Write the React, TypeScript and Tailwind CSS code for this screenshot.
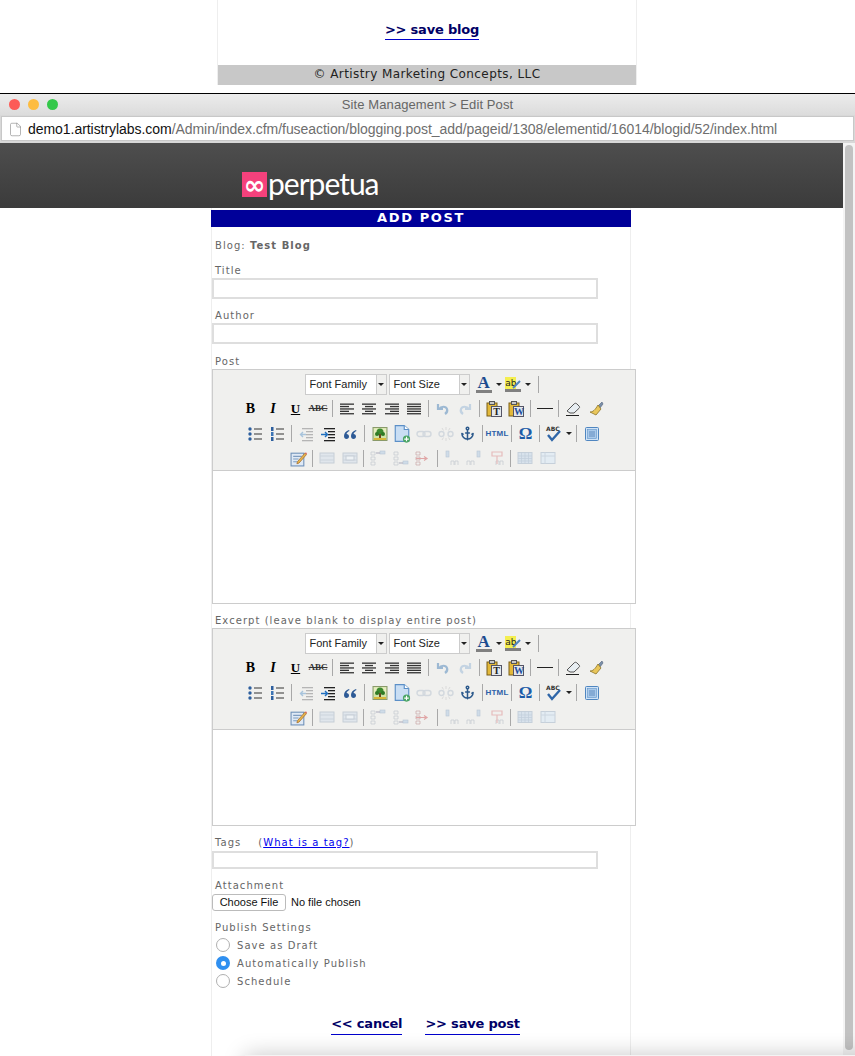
import React from 'react';
import { Anchor, File } from 'lucide-react';

const verdana = { fontFamily: '"DejaVu Sans", Verdana, sans-serif' };

const Cell = ({ children, w = 'w-[22.5px]' }: { children: React.ReactNode; w?: string }) => (
  <div className={`${w} h-[20px] flex items-center justify-center shrink-0`}>{children}</div>
);

const Sep = ({ w = 'w-[6px]' }: { w?: string }) => (
  <div className={`${w} h-[20px] flex items-center justify-center shrink-0`}>
    <div className="w-[1px] h-[17px] bg-[#a8a8a8]" />
  </div>
);

const Arrow = () => (
  <div className="w-0 h-0 border-x-[3px] border-x-transparent border-t-[3px] border-t-[#222]" />
);

const Ico = ({ children, size = 16 }: { children: React.ReactNode; size?: number }) => (
  <svg width={size} height={size} viewBox="0 0 16 16" fill="none">
    {children}
  </svg>
);

const Lines = ({ rows, color = '#333' }: { rows: [number, number][]; color?: string }) => (
  <Ico>
    {rows.map(([a, b], i) => (
      <rect key={i} x={a} y={2.5 + i * 2.4} width={b - a} height={1.3} fill={color} />
    ))}
  </Ico>
);

const AlignLeft = () => <Lines rows={[[1, 15], [1, 10], [1, 15], [1, 10], [1, 15]]} />;
const AlignCenter = () => <Lines rows={[[1, 15], [4, 12], [1, 15], [4, 12], [1, 15]]} />;
const AlignRight = () => <Lines rows={[[1, 15], [6, 15], [1, 15], [6, 15], [1, 15]]} />;
const AlignFull = () => <Lines rows={[[1, 15], [1, 15], [1, 15], [1, 15], [1, 15]]} />;

const Undo = ({ flip }: { flip?: boolean }) => (
  <Ico>
    <g transform={flip ? 'matrix(-1 0 0 1 16 0)' : undefined}>
      <path d="M3 3v5h5" stroke={flip ? '#c3d3e2' : '#9db9d3'} strokeWidth="2.200" />
      <path d="M4 8c2-3 7-3 8 0 .7 2-.5 4-2 5" stroke={flip ? '#c3d3e2' : '#9db9d3'} strokeWidth="2.200" />
    </g>
  </Ico>
);

const Paste = ({ letter, color }: { letter: string; color: string }) => (
  <div className="relative w-[16px] h-[16px]">
    <svg width="16" height="16" viewBox="0 0 16 16" fill="none">
      <rect x="1" y="2" width="10" height="13" fill="#e3b93a" stroke="#7a5f18" />
      <rect x="3.5" y="0.5" width="5" height="3" fill="#c8c8c8" stroke="#555" />
      <rect x="5.500" y="5.500" width="10" height="10" fill="#e4e8ec" stroke="#556" />
    </svg>
    <span className={`absolute left-[6px] top-[6px] w-[10px] text-center text-[10px] leading-[10px] font-bold ${color}`} style={{ fontFamily: '"Liberation Serif", serif' }}>
      {letter}
    </span>
  </div>
);

const Eraser = () => (
  <Ico>
    <path d="M2 10 9 3c1-1 2-1 3 0l2 2c.8.8.8 1.5 0 2.300L9 12H5z" fill="#e8eef2" stroke="#555" />
    <path d="M1 14.500h13" stroke="#222" />
  </Ico>
);

const Brush = () => (
  <Ico>
    <path d="m10 5 2 2 3-4-1-2z" fill="#7a8fa8" stroke="#50607a" strokeWidth=".6" />
    <path d="M10 4 13 8 8 14 2 11c3 0 5-2 8-7z" fill="#e9c65a" stroke="#8c7428" strokeWidth=".8" />
  </Ico>
);

const Bullets = () => (
  <Ico>
    {[3, 8, 13].map(y => (
      <g key={y}>
        <circle cx="3" cy={y} r="1.700" fill="#2d5f9e" />
        <rect x="7" y={y - 0.5} width="8" height="1" fill="#333" />
      </g>
    ))}
  </Ico>
);

const Numbers = () => (
  <Ico>
    {[3, 8, 13].map((y, i) => (
      <g key={y}>
        <rect x="2" y={y - 2} width="2.500" height="4" fill={i === 1 ? '#3d75b5' : '#2d5f9e'} />
        <rect x="7" y={y - 0.5} width="8" height="1" fill="#333" />
      </g>
    ))}
  </Ico>
);

const Indent = ({ muted }: { muted?: boolean }) => {
  const c = muted ? '#b5b5b5' : '#222';
  const a = muted ? '#a8c4dc' : '#1f6fc0';
  return (
    <Ico>
      <rect x="4" y="2" width="11" height="1.300" fill={c} />
      <rect x="8" y="5" width="7" height="1.300" fill={c} />
      <rect x="8" y="8" width="7" height="1.300" fill={c} />
      <rect x="8" y="11" width="7" height="1.300" fill={c} />
      <rect x="4" y="14" width="11" height="1.300" fill={c} />
      <path d={muted ? 'M8 8.500H3M5 6 2.500 8.500 5 11' : 'M1 8.500h6M5 6l2.500 2.500L5 11'} stroke={a} strokeWidth="1.400" />
    </Ico>
  );
};

const Quote = () => (
  <Ico>
    <path d="M7 4C4 5 2 7 2 10c0 2 1 3 2.500 3S7 12 7 10.500 6 8 4.500 8C5 6.500 6 5.500 7.500 5zM14 4c-3 1-5 3-5 6 0 2 1 3 2.500 3s2.500-1 2.500-2.500S13 8 11.500 8c.5-1.500 1.500-2.500 3-3z" fill="#2d5a96" />
  </Ico>
);

const ImageIco = () => (
  <Ico>
    <rect x="1" y="1.500" width="14" height="13" fill="#cfe4a8" stroke="#8a9a6a" />
    <rect x="2" y="2.500" width="12" height="6" fill="#e8ecc0" />
    <circle cx="8" cy="6" r="3.500" fill="#3c8a2e" />
    <circle cx="5" cy="8" r="2" fill="#2f7a24" />
    <circle cx="11" cy="8" r="2" fill="#2f7a24" />
    <rect x="7" y="8" width="2" height="4" fill="#6a4a20" />
    <rect x="2" y="12" width="12" height="2" fill="#d8b838" />
  </Ico>
);

const DocAdd = () => (
  <Ico size={18}>
    <path d="M2 .500h8L14 4v10.500H2z" fill="#c9def4" stroke="#5b8fc7" />
    <path d="M10 .500V4h4" fill="#fff" stroke="#5b8fc7" />
    <circle cx="12" cy="12.500" r="3.200" fill="#4aa564" />
    <path d="M12 10.500v4M10 12.500h4" stroke="#fff" />
  </Ico>
);

const LinkIco = ({ broken }: { broken?: boolean }) => (
  <Ico>
    <rect x="1" y="5.500" width={broken ? 5 : 8} height="5" rx="2.500" stroke="#d2d8de" strokeWidth="1.400" />
    <rect x={broken ? 10 : 7} y="5.500" width={broken ? 5 : 8} height="5" rx="2.500" stroke="#d2d8de" strokeWidth="1.400" />
    {broken && <path d="M8 1v3M8 12v3M4 2l1.500 2.500M12 2l-1.500 2.500M4 14l1.500-2.500M12 14l-1.500-2.500" stroke="#dadada" />}
  </Ico>
);

const Spell = () => (
  <div className="relative w-[16px] h-[16px]">
    <span className="absolute left-0 top-[-1px] text-[6px] leading-[7px] font-bold text-[#333]" style={verdana}>ABC</span>
    <svg className="absolute left-0 top-0" width="16" height="16" viewBox="0 0 16 16" fill="none">
      <path d="m2 9 4 5 8-9" stroke="#2f66a8" strokeWidth="2.400" />
    </svg>
  </div>
);

const Preview = () => (
  <Ico>
    <rect x="1.500" y="1.500" width="13" height="13" rx="1" fill="#cfe2f6" stroke="#4f86c0" />
    <rect x="3.500" y="3.500" width="9" height="9" fill="#a9c9ea" stroke="#5f93c8" strokeWidth=".6" />
    <path d="M5 6h6M5 8h6M5 10h6" stroke="#4f7fb5" strokeWidth=".8" />
  </Ico>
);

const Note = () => (
  <Ico size={17}>
    <rect x="1" y="3" width="12" height="12" fill="#dfe9f5" stroke="#6d8fb8" />
    <path d="M3 6h8M3 8.500h5M3 11h4" stroke="#7f9dc0" />
    <path d="m7 11 7-8 1.500 1.300-7 8L6.500 13z" fill="#e8b64a" stroke="#a36b2a" strokeWidth=".7" />
    <path d="m14 3 1-1 1 1.200-.8 1z" fill="#d9645a" />
  </Ico>
);

const TableRow = ({ mid }: { mid?: boolean }) => (
  <Ico>
    <rect x="1" y="3" width="14" height="10" fill="#e0e6ec" stroke="#c6ced6" />
    <path d="M1 6h14M1 10h14" stroke="#ccd4dc" />
    {mid && <rect x="4" y="6" width="8" height="4" fill="#eef2f5" stroke="#c6ced6" />}
  </Ico>
);

const RowOp = ({ kind }: { kind: number }) => (
  <Ico>
    <path d="M1 2h4v3H1zM1 7h4v3H1zM1 12h4v3H1z" stroke={kind === 2 ? '#c8a8a8' : '#c3c9ce'} strokeWidth=".7" />
    {kind === 0 && <><rect x="10" y="1" width="5" height="3" fill="#cfdce8" stroke="#b8c6d4" strokeWidth=".6" /><path d="M6 3h4" stroke="#aab" /></>}
    {kind === 1 && <><rect x="10" y="11" width="5" height="3" fill="#cfdce8" stroke="#b8c6d4" strokeWidth=".6" /><path d="M6 13h4" stroke="#aab" /></>}
    {kind === 2 && <path d="M1 8.500h10M9 6.500l3 2-3 2" stroke="#e0a6a6" strokeWidth="1.200" />}
  </Ico>
);

const ColOp = ({ kind }: { kind: number }) => (
  <Ico>
    <path d={kind === 1 ? 'M1 15v-4h3v4M5 15v-4h3v4' : 'M7 15v-4h3v4M11 15v-4h3v4'} stroke="#c3c9ce" strokeWidth=".7" />
    {kind === 2 ? (
      <path d="M3 2h10v4H3zM8 6v8" stroke="#e6bcbc" strokeWidth="1.200" />
    ) : (
      <rect x={kind === 0 ? 2 : 11} y="1" width="3" height="6" fill="#cfdce8" stroke="#b8c6d4" strokeWidth=".6" />
    )}
  </Ico>
);

const TableGrid = ({ plain }: { plain?: boolean }) => (
  <Ico>
    <rect x="1" y="2.500" width="14" height="11" fill={plain ? '#e3ecf3' : '#d8e2ec'} stroke="#c6d0da" />
    {plain ? (
      <path d="M5 2.500v11M1 6h14" stroke="#ccd6e0" />
    ) : (
      <path d="M4.500 2.500v11M8 2.500v11M11.500 2.500v11M1 6h14M1 8.500h14M1 11h14" stroke="#c2cedb" strokeWidth=".7" />
    )}
  </Ico>
);

const TextBtn = ({ children, cls }: { children: React.ReactNode; cls: string }) => (
  <span className={cls} style={{ fontFamily: '"Liberation Serif", serif' }}>{children}</span>
);

const FontSelect = ({ label, w }: { label: string; w: string }) => (
  <div className={`${w} h-[21px] flex border border-[#cccccc] bg-white shrink-0`}>
    <div className="flex-1 pl-[4px] text-[11px] leading-[19px] text-[#222]" style={{ fontFamily: '"Liberation Sans", sans-serif' }}>{label}</div>
    <div className="w-[10px] bg-[#f0f0ee] border-l border-[#cccccc] flex items-center justify-center">
      <Arrow />
    </div>
  </div>
);

const Toolbar = () => (
  <div className="h-[101px] bg-[#f0f0ee] border-b border-[#cccccc] flex flex-col items-center pt-[4px] pr-[2px]">
    <div className="h-[22px] flex items-start">
      <FontSelect label="Font Family" w="w-[82px]" />
      <div className="w-[2px]" />
      <FontSelect label="Font Size" w="w-[81px]" />
      <div className="w-[3px]" />
      <Cell>
        <div className="flex flex-col items-center leading-none">
          <span className="text-[17px] leading-[14px] font-bold text-[#1d4c8f]" style={{ fontFamily: '"Liberation Serif", serif' }}>A</span>
          <div className="w-[16px] h-[3px] bg-[#808080]" />
        </div>
      </Cell>
      <Cell w="w-[7px]"><Arrow /></Cell>
      <Cell>
        <div className="relative flex flex-col items-start w-[16px]">
          <span className="w-[11px] text-[9px] leading-[12px] bg-[#f4ee50] text-[#222] text-center" style={verdana}>ab</span>
          <svg className="absolute left-[7px] top-[2px]" width="9" height="10" viewBox="0 0 9 10" fill="none">
            <path d="M1 9 8 2" stroke="#4f86c0" strokeWidth="2" />
          </svg>
          <div className="w-[16px] h-[3px] bg-[#808080]" />
        </div>
      </Cell>
      <Cell w="w-[7px]"><Arrow /></Cell>
      <div className="w-[4px]" />
      <Sep />
    </div>
    <div className="h-[25px] flex items-center">
      <Cell><TextBtn cls="text-[14px] font-bold text-black">B</TextBtn></Cell>
      <Cell><TextBtn cls="text-[14px] font-bold italic text-black">I</TextBtn></Cell>
      <Cell><TextBtn cls="text-[13px] font-bold underline text-black">U</TextBtn></Cell>
      <Cell><TextBtn cls="text-[9px] font-bold line-through text-[#333]">ABC</TextBtn></Cell>
      <Sep />
      <Cell><AlignLeft /></Cell>
      <Cell><AlignCenter /></Cell>
      <Cell><AlignRight /></Cell>
      <Cell><AlignFull /></Cell>
      <Sep />
      <Cell><Undo /></Cell>
      <Cell><Undo flip /></Cell>
      <Sep />
      <Cell><Paste letter="T" color="text-[#222]" /></Cell>
      <Cell><Paste letter="W" color="text-[#1f4f9e]" /></Cell>
      <Sep />
      <Cell><div className="w-[16px] h-[1px] bg-[#222]" /></Cell>
      <Sep />
      <Cell><Eraser /></Cell>
      <Cell><Brush /></Cell>
    </div>
    <div className="h-[25px] flex items-center">
      <Cell w="w-[22px]"><Bullets /></Cell>
      <Cell w="w-[22px]"><Numbers /></Cell>
      <Sep w="w-[7.5px]" />
      <Cell w="w-[22px]"><Indent muted /></Cell>
      <Cell w="w-[22px]"><Indent /></Cell>
      <Cell w="w-[22px]"><Quote /></Cell>
      <Sep w="w-[7.5px]" />
      <Cell w="w-[22px]"><ImageIco /></Cell>
      <Cell w="w-[22px]"><DocAdd /></Cell>
      <Cell w="w-[22px]"><LinkIco /></Cell>
      <Cell w="w-[22px]"><LinkIco broken /></Cell>
      <Cell w="w-[22px]"><Anchor size={15} strokeWidth={2.4} color="#2d5a8c" /></Cell>
      <Sep w="w-[7.5px]" />
      <Cell w="w-[22px]"><span className="text-[8px] tracking-[0.2px] font-bold text-[#2d5fa8]" style={{ fontFamily: '"Liberation Sans", sans-serif' }}>HTML</span></Cell>
      <Sep w="w-[7.5px]" />
      <Cell w="w-[20px]"><TextBtn cls="text-[17px] font-bold text-[#1d5ca8]">Ω</TextBtn></Cell>
      <Sep w="w-[7.5px]" />
      <Cell w="w-[22px]"><Spell /></Cell>
      <Cell w="w-[8px]"><Arrow /></Cell>
      <Sep w="w-[7.5px]" />
      <Cell w="w-[22px]"><Preview /></Cell>
    </div>
    <div className="h-[24px] flex items-center">
      <Cell><Note /></Cell>
      <Sep />
      <Cell><TableRow /></Cell>
      <Cell><TableRow mid /></Cell>
      <Sep />
      <Cell><RowOp kind={0} /></Cell>
      <Cell><RowOp kind={1} /></Cell>
      <Cell><RowOp kind={2} /></Cell>
      <Sep />
      <Cell><ColOp kind={0} /></Cell>
      <Cell><ColOp kind={1} /></Cell>
      <Cell><ColOp kind={2} /></Cell>
      <Sep />
      <Cell><TableGrid /></Cell>
      <Cell><TableGrid plain /></Cell>
    </div>
  </div>
);

const Editor = ({ bodyHeight }: { bodyHeight: string }) => (
  <div className="w-[424px] border border-[#cccccc] bg-white">
    <Toolbar />
    <div className={bodyHeight} />
  </div>
);

const Label = ({ children, cls = '' }: { children: React.ReactNode; cls?: string }) => (
  <div className={`text-[10px] leading-[13px] tracking-[1.05px] text-[#666666] pl-[3px] ${cls}`} style={verdana}>{children}</div>
);

const TextInput = () => (
  <input type="text" className="block w-[386px] h-[21px] border-2 border-[#dedede] bg-white outline-none" />
);

const Radio = ({ label, checked }: { label: string; checked?: boolean }) => (
  <div className="h-[18px] flex items-center pl-[4px] gap-[7px]">
    {checked ? (
      <div className="w-[14px] h-[14px] rounded-full bg-[#2f8ff0] flex items-center justify-center">
        <div className="w-[5px] h-[5px] rounded-full bg-white" />
      </div>
    ) : (
      <div className="w-[14px] h-[14px] rounded-full border border-[#b0b0b0] bg-white" />
    )}
    <span className="text-[10px] tracking-[1.05px] text-[#666666]" style={verdana}>{label}</span>
  </div>
);

const ActionLink = ({ children }: { children: React.ReactNode }) => (
  <a className="text-[13px] leading-[17px] font-bold text-[#000066] border-b border-[#0000cc] pb-[2px] tracking-[-0.2px]" style={verdana}>{children}</a>
);

export default function App() {
  return (
    <div className="relative w-[855px] h-[1056px] overflow-hidden bg-white">
      {/* window behind */}
      <div className="h-[94px] bg-white border-b border-black">
        <div className="ml-[217px] w-[420px] h-[85px] flex flex-col border-x border-[#eeeeee]">
          <div className="flex-1 flex justify-center pt-[16px] pl-[10px]">
            <div className="h-[20px]"><ActionLink>&gt;&gt; save blog</ActionLink></div>
          </div>
          <div className="h-[20px] bg-[#c8c8c8] text-center text-[12px] leading-[18px] tracking-[0.42px] text-[#222]" style={verdana}>
            © Artistry Marketing Concepts, LLC
          </div>
        </div>
      </div>

      {/* title bar */}
      <div className="relative h-[21px] bg-gradient-to-b from-[#ececec] to-[#dcdcdc] flex items-center justify-center">
        <div className="absolute left-[9px] top-[5px] flex gap-[8px]">
          <div className="w-[11px] h-[11px] rounded-full bg-[#fc5b57]" />
          <div className="w-[11px] h-[11px] rounded-full bg-[#fdbc40]" />
          <div className="w-[11px] h-[11px] rounded-full bg-[#34c84a]" />
        </div>
        <span className="text-[13px] tracking-[0.1px] text-[#666666]" style={{ fontFamily: '"Liberation Sans", sans-serif' }}>Site Management &gt; Edit Post</span>
      </div>

      {/* url bar */}
      <div className="h-[28px] bg-[#d8d8d8] px-[1px] pt-[1px]">
        <div className="h-[25px] bg-white border border-[#c8c8c8] flex items-center pl-[6px] gap-[5px] pt-[1px] text-[14px] tracking-[-0.05px]" style={{ fontFamily: '"Liberation Sans", sans-serif' }}>
          <File size={15} strokeWidth={1} color="#888888" />
          <span className="text-[#111111]">demo1.artistrylabs.com</span>
          <span className="ml-[-5px] text-[#6e6e6e]">/Admin/index.cfm/fuseaction/blogging.post_add/pageid/1308/elementid/16014/blogid/52/index.html</span>
        </div>
      </div>

      <div className="flex">
        <div className="w-[843px] shrink-0">
          {/* site header */}
          <div className="h-[65px] bg-gradient-to-b from-[#4e4e4e] to-[#3b3b3b] pl-[242px] pt-[29px] flex items-start">
            <div className="w-[25px] h-[25px] bg-[#f5417c] flex items-center justify-center text-white text-[26px] leading-[22px] font-bold" style={verdana}>∞</div>
            <span className="ml-[1px] text-[30px] leading-[23px] tracking-[-1px] font-normal text-white" style={{ fontFamily: 'Lato, sans-serif' }}>perpetua</span>
          </div>

          {/* form column */}
          <div className="ml-[211px] w-[420px] border-x border-[#eeeeee] pt-[2px] h-[848px]">
            <div className="h-[17px] mx-[-1px] bg-[#000099] text-center text-white text-[13px] leading-[15px] font-bold tracking-[1.6px]" style={verdana}>ADD POST</div>
            <Label cls="mt-[12px]">Blog: <b className="font-bold">Test Blog</b></Label>
            <Label cls="mt-[12px]">Title</Label>
            <div className="mt-[1px]"><TextInput /></div>
            <Label cls="mt-[10px]">Author</Label>
            <div className="mt-[1px]"><TextInput /></div>
            <Label cls="mt-[11px]">Post</Label>
            <div className="mt-[1px]"><Editor bodyHeight="h-[132px]" /></div>
            <Label cls="mt-[10px]">Excerpt (leave blank to display entire post)</Label>
            <div className="mt-[1px]"><Editor bodyHeight="h-[95px]" /></div>
            <Label cls="mt-[10px]">Tags &nbsp;&nbsp; (<a className="text-[#0000ee] underline">What is a tag?</a>)</Label>
            <div className="mt-[2px]"><input type="text" className="block w-[386px] h-[18px] border-2 border-[#dedede] bg-white outline-none" /></div>
            <Label cls="mt-[10px]">Attachment</Label>
            <div className="flex items-center mt-[2px]">
              <button className="h-[17px] w-[74px] bg-white border border-[#bbbbbb] rounded-[3px] text-[11px] leading-[15px] text-[#111111]" style={{ fontFamily: '"Liberation Sans", sans-serif' }}>Choose File</button>
              <span className="ml-[5px] text-[11px] text-[#111111]" style={{ fontFamily: '"Liberation Sans", sans-serif' }}>No file chosen</span>
            </div>
            <Label cls="mt-[10px]">Publish Settings</Label>
            <div className="mt-[2px]">
              <Radio label="Save as Draft" />
              <Radio label="Automatically Publish" checked />
              <Radio label="Schedule" />
            </div>
            <div className="mt-[25px] flex justify-center gap-[23px] pl-[9px]">
              <ActionLink>&lt;&lt; cancel</ActionLink>
              <ActionLink>&gt;&gt; save post</ActionLink>
            </div>
          </div>
        </div>

        {/* scrollbar */}
        <div className="w-[12px] bg-[#f4f4f4] pt-[2px] pl-[2px]">
          <div className="w-[8px] h-[905px] rounded-full bg-[#c2c2c2]" />
        </div>
      </div>

      {/* shadow of the window below */}
      <div className="absolute left-[245px] right-[-40px] bottom-[-40px] h-[41px] bg-[#f4f4f4] shadow-[0_0_22px_rgba(0,0,0,0.22)]" />
    </div>
  );
}
